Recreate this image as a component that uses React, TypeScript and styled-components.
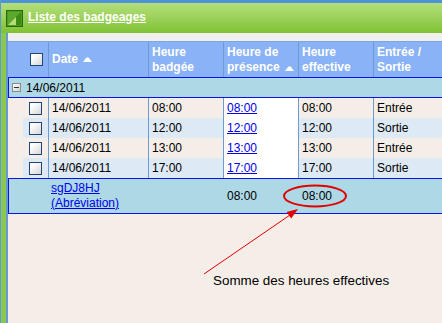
import React from "react";
import styled, { createGlobalStyle } from "styled-components";

const GlobalStyle = createGlobalStyle`
  html, body { margin: 0; padding: 0; background: #f5eee8; }
  body { font-family: "Liberation Sans", Arial, sans-serif; font-size: 12px; color: #000; }
`;

const COLS = "15px 25px 100px 75px 75px 75px 75px";
const LINE = "#6b9bd1";
const BLUE = "#0a14e6";

const Frame = styled.div`
  position: relative;
  width: 442px;
  height: 323px;
  overflow: hidden;
  display: flex;
  flex-direction: column;
  border-left: 1px solid #5b9bd5;
  box-sizing: border-box;
  background: #86c64a;
`;

const TopStrip = styled.div`
  height: 3px;
  background: #4d93d6;
  flex: none;
`;

const TitleBar = styled.div`
  height: 30px;
  flex: none;
  display: flex;
  align-items: center;
  gap: 5px;
  padding-left: 5px;
  background: linear-gradient(#b3de7c, #9ed35d 45%, #7fc133);
`;

const Title = styled.a`
  color: #fff;
  font-weight: bold;
  font-size: 12px;
  text-decoration: underline;
  line-height: 15px;
  margin-top: -1px;
`;

const Body = styled.div`
  flex: 1;
  display: flex;
  padding-left: 5px;
  background: #8ac84e;
`;

const Panel = styled.div`
  flex: 1;
  border-left: 2px solid #6a98d4;
  background: #f5eee8;
  display: flex;
  flex-direction: column;
`;

const GreyStrip = styled.div`
  height: 8px;
  background: #efefef;
  flex: none;
`;

const Grid = styled.div`
  width: 440px;
  display: flex;
  flex-direction: column;
`;

const HeadRow = styled.div`
  display: grid;
  grid-template-columns: ${COLS};
  height: 36px;
  box-sizing: border-box;
  border-top: 1px solid #7ea6dc;
  background: #8ab2f6;
`;

const HeadCell = styled.div<{ $first?: boolean }>`
  border-left: ${(p) => (p.$first ? "none" : `1px solid ${LINE}`)};
  color: #fff;
  font-weight: bold;
  line-height: 15px;
  padding: 0 3px;
  display: flex;
  align-items: center;
  gap: 5px;
`;

const ArrowSlot = styled.span`
  align-self: flex-end;
  margin-bottom: 6px;
  display: flex;
`;

const CheckCell = styled.div`
  display: flex;
  align-items: center;
  justify-content: center;
  padding-left: 1px;
`;

const Check = styled.span`
  display: block;
  width: 13px;
  height: 13px;
  box-sizing: border-box;
  border: 1px solid #1f4676;
  background: linear-gradient(135deg, #ffffff 20%, #d6d6d6);
`;

const RowCheck = styled(Check)`
  margin-left: 3px;
`;

const SortArrow = () => (
  <svg width="9" height="5" viewBox="0 0 9 5">
    <path d="M0 5 L3 1 Q4.5 -0.4 6 1 L9 5 Z" fill="#fff" />
  </svg>
);

const GroupRow = styled.div`
  height: 21px;
  box-sizing: border-box;
  border: 1px solid ${BLUE};
  background: #add8e6;
  display: flex;
  align-items: center;
  gap: 5px;
  padding-left: 3px;
`;

const Toggle = styled.span`
  position: relative;
  display: block;
  width: 9px;
  height: 9px;
  box-sizing: border-box;
  border: 1px solid #8c8c8c;
  background: linear-gradient(135deg, #ffffff, #d0d0d0);
  &::after {
    content: "";
    position: absolute;
    left: 1px;
    right: 1px;
    top: 3px;
    height: 1px;
    background: #333;
  }
`;

const DataRow = styled.div<{ $alt?: boolean }>`
  display: grid;
  grid-template-columns: ${COLS};
  height: 20px;
  --row-bg: ${(p) => (p.$alt ? "#dde9f5" : "#f5eee8")};
`;

const Cell = styled.div<{ $white?: boolean; $noLine?: boolean }>`
  background: ${(p) => (p.$white ? "#ffffff" : "var(--row-bg)")};
  border-left: ${(p) => (p.$noLine ? "none" : `1px solid ${LINE}`)};
  padding-left: 3px;
  display: flex;
  align-items: center;
  line-height: 15px;
`;

const Indent = styled.div``;

const Link = styled.a`
  color: #0000ee;
  text-decoration: underline;
  cursor: pointer;
`;

const SumRow = styled.div`
  display: grid;
  grid-template-columns: 14px 25px 100px 75px 75px 75px 1fr;
  height: 36px;
  box-sizing: border-box;
  border: 1px solid ${BLUE};
  background: #add8e6;
`;

const SumCell = styled.div`
  display: flex;
  flex-direction: column;
  justify-content: center;
  padding-left: 4px;
  line-height: 15px;
`;

const LinkCell = styled(SumCell)`
  padding-left: 3px;
`;

const Overlay = styled.svg`
  position: absolute;
  left: 0;
  top: 0;
  pointer-events: none;
`;

const Note = styled.div`
  position: absolute;
  left: 212px;
  top: 273px;
  font-size: 13.4px;
  line-height: 16px;
  color: #000;
`;

const rows = [
  { t: "08:00", s: "Entrée" },
  { t: "12:00", s: "Sortie" },
  { t: "13:00", s: "Entrée" },
  { t: "17:00", s: "Sortie" },
];

const TitleIcon = () => (
  <svg width="17" height="17" viewBox="0 0 17 17">
    <rect x="0.5" y="0.5" width="16" height="16" fill="#3f8f1a" stroke="#2c6a10" />
    <rect x="1.5" y="1.5" width="14" height="14" fill="#5aa82c" />
    <polygon points="2,15 15,2 15,15" fill="#3f8a14" />
    <polygon points="2,15 10,7 10,15" fill="#b6de78" />
  </svg>
);

export default function App() {
  return (
    <>
      <GlobalStyle />
      <Frame>
        <TopStrip />
        <TitleBar>
          <TitleIcon />
          <Title>Liste des badgeages</Title>
        </TitleBar>
        <Body>
          <Panel>
            <GreyStrip />
            <Grid>
              <HeadRow>
                <HeadCell $first />
                <CheckCell>
                  <Check />
                </CheckCell>
                <HeadCell>
                  Date <SortArrow />
                </HeadCell>
                <HeadCell>Heure<br />badgée</HeadCell>
                <HeadCell>
                  <span>Heure de<br />présence</span>
                  <ArrowSlot>
                    <SortArrow />
                  </ArrowSlot>
                </HeadCell>
                <HeadCell>Heure<br />effective</HeadCell>
                <HeadCell>Entrée /<br />Sortie</HeadCell>
              </HeadRow>
              <GroupRow>
                <Toggle />
                <span>14/06/2011</span>
              </GroupRow>
              {rows.map((r, i) => (
                <DataRow key={i} $alt={i % 2 === 1}>
                  <Indent />
                  <Cell $noLine>
                    <RowCheck />
                  </Cell>
                  <Cell>14/06/2011</Cell>
                  <Cell>{r.t}</Cell>
                  <Cell $white>
                    <Link>{r.t}</Link>
                  </Cell>
                  <Cell>{r.t}</Cell>
                  <Cell>{r.s}</Cell>
                </DataRow>
              ))}
              <SumRow>
                <div />
                <div />
                <LinkCell>
                  <Link>sgDJ8HJ</Link>
                  <Link>(Abréviation)</Link>
                </LinkCell>
                <div />
                <SumCell>08:00</SumCell>
                <SumCell>08:00</SumCell>
                <div />
              </SumRow>
            </Grid>
          </Panel>
        </Body>
        <Overlay width="442" height="323" viewBox="0 0 442 323">
          <ellipse cx="314" cy="196" rx="31" ry="10.5" fill="none" stroke="#e20000" strokeWidth="2" />
          <line x1="203" y1="274" x2="289" y2="215" stroke="#e20000" strokeWidth="1" />
          <polygon points="297,209 290.2,218.6 285.6,212" fill="#e20000" />
        </Overlay>
        <Note>Somme des heures effectives</Note>
      </Frame>
    </>
  );
}
